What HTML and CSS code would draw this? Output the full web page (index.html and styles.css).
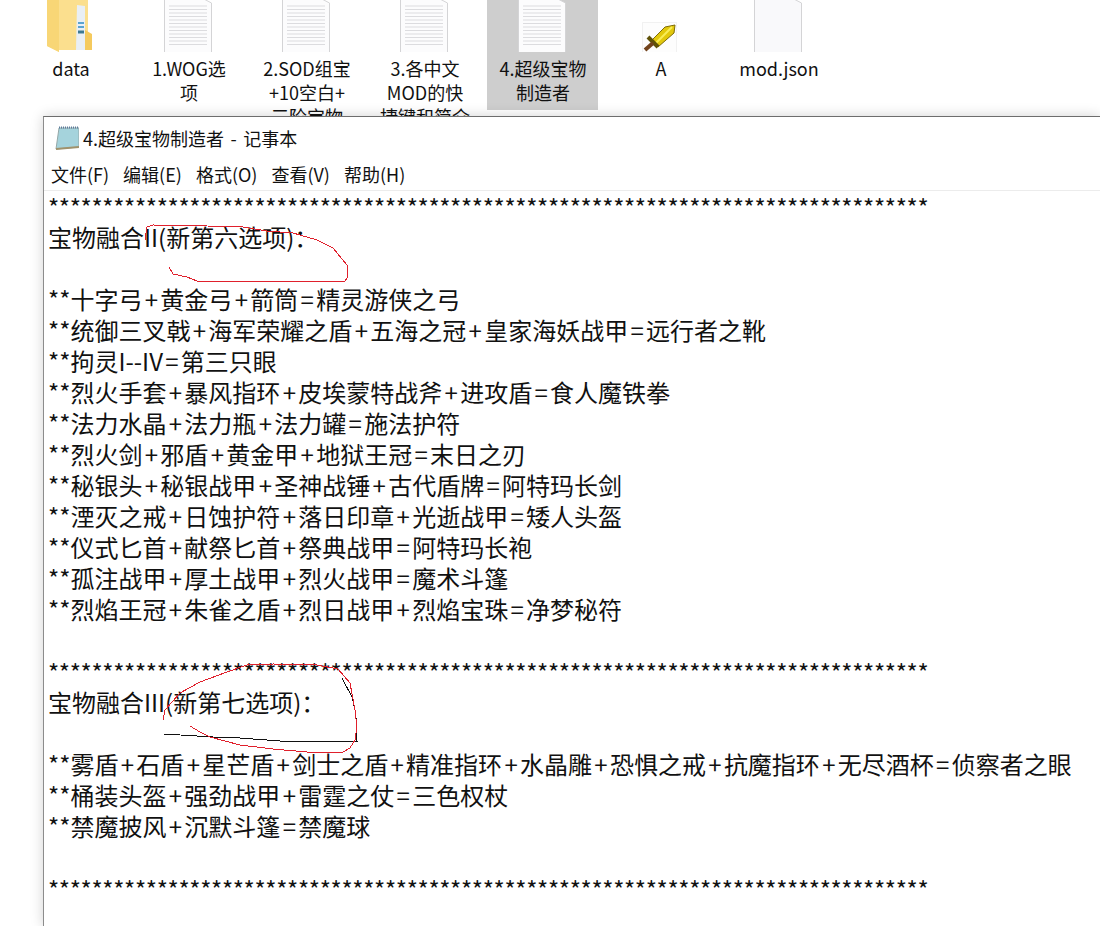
FILE: index.html
```html
<!DOCTYPE html>
<html lang="zh-CN">
<head>
<meta charset="utf-8">
<title>4.超级宝物制造者 - 记事本</title>
<link rel="stylesheet" href="styles.css">
</head>
<body>
<svg class="defs" width="0" height="0" aria-hidden="true">
  <defs>
    <symbol id="doc-blank" viewBox="0 0 48 52">
      <path d="M0.5 -2H38L47.5 3V52.5H0.5Z" fill="#f9f9fb" stroke="#d4d4d6"/>
    </symbol>
    <symbol id="doc-lines" viewBox="0 0 48 52">
      <path d="M0.5 -2H38L47.5 3V52.5H0.5Z" fill="#fcfcfd" stroke="#d4d4d6"/>
      <path d="M5 6H43M5 9.500H43M5 13H43M5 16.500H43M5 20H43M5 23.500H43M5 27H43M5 30.500H43M5 34H43M5 37.500H43M5 41H43M5 44.500H43" stroke="#dcdcdf"/>
    </symbol>
  </defs>
</svg>

<section class="desktop">
  <div class="file file-folder">
    <svg class="icon" width="48" height="52" viewBox="0 0 48 52">
      <path d="M1 0H42V50H13V52L1 46Z" fill="#fbdf8e"/>
      <path d="M1 0H13V52L1 46Z" fill="#f8d676"/>
      <path d="M31 5L39 6V50H30Z" fill="#e9eff5"/>
      <path d="M32 23H38M32 27H38" stroke="#5ba3d0" stroke-width="2"/>
      <path d="M32 32H38" stroke="#3d7a94" stroke-width="3"/>
      <path d="M39 30L46 34V50H39Z" fill="#f5ca5e"/>
    </svg>
    <div class="name">data</div>
  </div>
  <div class="file">
    <svg class="icon" width="48" height="52"><use href="#doc-lines"/></svg>
    <div class="name">1.WOG选<br>项</div>
  </div>
  <div class="file">
    <svg class="icon" width="48" height="52"><use href="#doc-lines"/></svg>
    <div class="name">2.SOD组宝<br>+10空白+<br>三阶宝物</div>
  </div>
  <div class="file">
    <svg class="icon" width="48" height="52"><use href="#doc-lines"/></svg>
    <div class="name">3.各中文<br>MOD的快<br>捷键和简介</div>
  </div>
  <div class="file selected">
    <svg class="icon" width="48" height="52"><use href="#doc-lines"/></svg>
    <div class="name">4.超级宝物<br>制造者</div>
  </div>
  <div class="file">
    <svg class="icon" width="48" height="52" viewBox="-1 0 48 52">
      <rect x="5.500" y="22.500" width="34" height="30" fill="#fdfdfd" stroke="#e4e4e4" stroke-dasharray="1 1"/>
      <path d="M38 25L28 27L15 40L21 47L37 33Z" fill="#e2c80c" stroke="#7f6c06"/>
      <path d="M35 27L19 43" stroke="#f8ec58" stroke-width="2"/>
      <path d="M11 37L21 47" stroke="#5f5208" stroke-width="4"/>
      <path d="M16 43L8 50" stroke="#72431c" stroke-width="4"/>
    </svg>
    <div class="name">A</div>
  </div>
  <div class="file">
    <svg class="icon" width="48" height="52"><use href="#doc-blank"/></svg>
    <div class="name">mod.json</div>
  </div>
</section>

<main class="window">
  <header class="titlebar">
    <svg class="app-icon" width="24" height="24" viewBox="0 0 24 24">
      <path d="M4 2H24V21L1 23Z" fill="#a5d3dc" stroke="#94a8a8"/>
      <path d="M1 23L24 21" stroke="#a0926c" stroke-width="2"/>
      <path d="M4 1.500H24" stroke="#5c7c9c" stroke-width="2" stroke-dasharray="1 1"/>
    </svg>
    <span class="title">4.超级宝物制造者 - 记事本</span>
  </header>
  <nav class="menubar">
    <span>文件(F)</span><span>编辑(E)</span><span>格式(O)</span><span>查看(V)</span><span>帮助(H)</span>
  </nav>
  <pre class="doc"><span class="rule">*********************************************************************************</span>
宝物融合II(新第六选项)：

**十字弓<b>+</b>黄金弓<b>+</b>箭筒<b>=</b>精灵游侠之弓
**统御三叉戟<b>+</b>海军荣耀之盾<b>+</b>五海之冠<b>+</b>皇家海妖战甲<b>=</b>远行者之靴
**拘灵I--IV<b>=</b>第三只眼
**烈火手套<b>+</b>暴风指环<b>+</b>皮埃蒙特战斧<b>+</b>进攻盾<b>=</b>食人魔铁拳
**法力水晶<b>+</b>法力瓶<b>+</b>法力罐<b>=</b>施法护符
**烈火剑<b>+</b>邪盾<b>+</b>黄金甲<b>+</b>地狱王冠<b>=</b>末日之刃
**秘银头<b>+</b>秘银战甲<b>+</b>圣神战锤<b>+</b>古代盾牌<b>=</b>阿特玛长剑
**湮灭之戒<b>+</b>日蚀护符<b>+</b>落日印章<b>+</b>光逝战甲<b>=</b>矮人头盔
**仪式匕首<b>+</b>献祭匕首<b>+</b>祭典战甲<b>=</b>阿特玛长袍
**孤注战甲<b>+</b>厚土战甲<b>+</b>烈火战甲<b>=</b>魔术斗篷
**烈焰王冠<b>+</b>朱雀之盾<b>+</b>烈日战甲<b>+</b>烈焰宝珠<b>=</b>净梦秘符

<span class="rule">*********************************************************************************</span>
宝物融合III(新第七选项)：

**雾盾<b>+</b>石盾<b>+</b>星芒盾<b>+</b>剑士之盾<b>+</b>精准指环<b>+</b>水晶雕<b>+</b>恐惧之戒<b>+</b>抗魔指环<b>+</b>无尽酒杯<b>=</b>侦察者之眼
**桶装头盔<b>+</b>强劲战甲<b>+</b>雷霆之仗<b>=</b>三色权杖
**禁魔披风<b>+</b>沉默斗篷<b>=</b>禁魔球

<span class="rule">*********************************************************************************</span></pre>
</main>

<svg class="scribble" width="1100" height="926" viewBox="0 0 1100 926" aria-hidden="true">
  <path class="red" d="M145 240L147 227L153 225L207 226L243 227L267 231L293 233L317 240L333 248L342 259L347 265L347 278L345 281L197 281L187 277L173 274L169 267"/>
  <path class="black" d="M342 678L352 697L355 710L356 718L357 741L280 741L240 738L213 737L164 734"/>
  <path class="red" d="M163 720L165 710L180 693L200 682L227 672L247 665L273 664L317 665L338 669L350 683L355 710L357 727L355 740L350 748L343 752L307 752L273 749L240 745L210 737L200 732L190 726"/>
</svg>
</body>
</html>
```

FILE: styles.css
```css
* { box-sizing: border-box; }
html, body { margin: 0; padding: 0; }
body {
  position: relative;
  width: 1100px;
  height: 926px;
  overflow: hidden;
  background: #fff;
  color: #111;
  font-family: "Noto Sans CJK SC", "Noto Sans", sans-serif;
}
.defs { position: absolute; }
.desktop {
  display: flex;
  gap: 7px;
  height: 116px;
  padding-left: 15px;
  overflow: hidden;
}
.file {
  flex: 0 0 111px;
  height: 110px;
  display: flex;
  flex-direction: column;
  align-items: center;
}
.file.selected { background: #cecece; }
.file .icon { display: block; flex: none; margin-right: 1px; }
.name {
  margin: 4px 0 0 1px;
  font-size: 18px;
  line-height: 24px;
  text-align: center;
  white-space: nowrap;
}
.window {
  height: 810px;
  margin-left: 43px;
  border-top: 1px solid #6d6d6d;
  border-left: 1px solid #8c8c8c;
  box-shadow: 0 0 12px rgba(0, 0, 0, 0.18);
  background: #fff;
  position: relative;
}
.titlebar {
  display: flex;
  align-items: center;
  gap: 4px;
  height: 42px;
  padding: 0 0 0 11px;
}
.app-icon { flex: none; }
.title { font-size: 18px; color: #111; word-spacing: 2.500px; }
.menubar {
  display: flex;
  gap: 14px;
  height: 32px;
  padding: 0 0 2px 7px;
  align-items: center;
  border-bottom: 1px solid #ececec;
  font-size: 18px;
}
.doc {
  margin: -1px 0 0;
  padding: 0 0 0 4px;
  font-family: "Noto Sans CJK SC", "Noto Sans", sans-serif;
  font-size: 24px;
  line-height: 31px;
  color: #111;
}
.doc b { font-weight: 400; padding: 0 2.300px; }
.rule { letter-spacing: -0.34px; line-height: 29px; vertical-align: -1px; }
.scribble {
  position: absolute;
  left: 0;
  top: 0;
  pointer-events: none;
  shape-rendering: crispEdges;
}
.scribble path { fill: none; stroke-width: 1; }
.red { stroke: #e0202c; }
.black { stroke: #111; }
```
